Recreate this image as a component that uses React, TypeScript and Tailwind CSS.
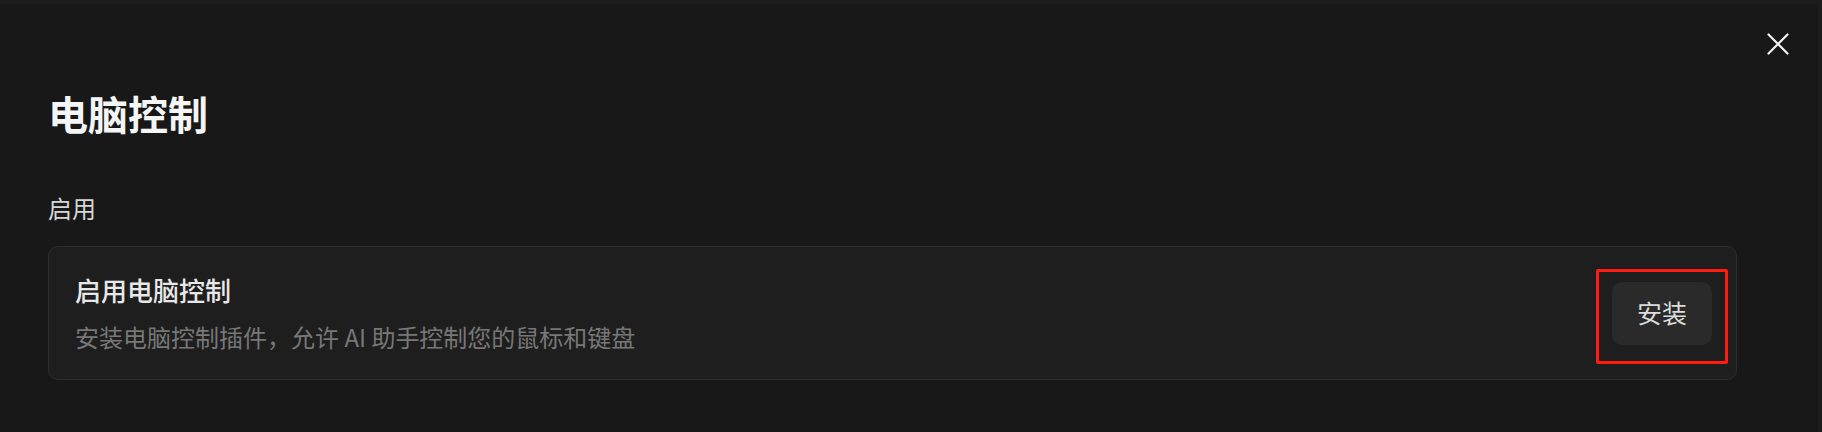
export default function App() {
  return (
    <div
      className="relative h-[432px] w-full overflow-hidden border-t-4 border-r-4 border-[#1d1d1d] bg-[#181818] pl-12 pt-[87px]"
      style={{ fontFamily: '"Noto Sans CJK SC", "Noto Sans", sans-serif' }}
    >
      <button className="absolute right-[29px] top-[29px] text-[#f2f2f2]" aria-label="关闭">
        <svg width="22" height="22" viewBox="0 0 22 22" fill="none" stroke="currentColor" strokeWidth="2.2" strokeLinecap="round">
          <path d="M1.5 1.5L20.5 20.5M20.5 1.5L1.5 20.5" />
        </svg>
      </button>

      <h1 className="text-[40px] font-bold leading-[44px] text-[#f5f5f5]">电脑控制</h1>

      <p className="mt-[57px] text-[24px] leading-[32px] text-[#d6d6d6]">启用</p>

      <div className="relative mt-[22px] flex h-[134px] w-[1689px] items-center justify-between rounded-[10px] border border-[#2e2e2e] bg-[#1e1e1e] pl-[26px] pr-[24px]">
        <div>
          <p className="text-[26px] font-medium leading-[34px] text-[#e8e8e8]">启用电脑控制</p>
          <p className="mt-[14px] text-[24px] leading-[32px] text-[#777777]">
            安装电脑控制插件，允许 AI 助手控制您的鼠标和键盘
          </p>
        </div>
        <button className="flex h-[63px] w-[100px] items-center justify-center rounded-[10px] bg-[#2a2a2b] text-[25px] text-[#dcdcdc]">
          安装
        </button>
        <div className="pointer-events-none absolute right-[8px] top-[22px] h-[95px] w-[132px] rounded-[2px] border-[3px] border-[#ff1a12]" />
      </div>
    </div>
  )
}
